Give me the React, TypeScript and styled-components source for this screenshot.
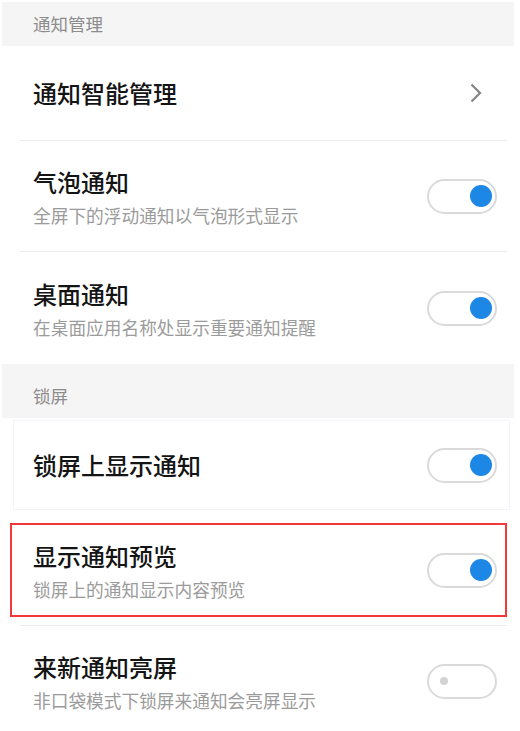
import React from 'react';
import styled, { createGlobalStyle } from 'styled-components';

const GlobalStyle = createGlobalStyle`
  html, body {
    margin: 0;
    padding: 0;
    background: #ffffff;
  }
  body {
    font-family: 'Noto Sans CJK SC', 'Noto Sans', sans-serif;
  }
`;

const Page = styled.div`
  width: 520px;
  height: 731px;
  overflow: hidden;
  background: #ffffff;
  padding-top: 2px;
  box-sizing: border-box;
`;

const SectionHeader = styled.div<{ $top: number; $bottom: number }>`
  margin: 0 6px 0 2px;
  background: #f5f5f5;
  padding: ${(p) => p.$top}px 0 ${(p) => p.$bottom}px 31px;
  font-size: 17.5px;
  line-height: 20px;
  color: #8d8d8d;
`;

const Row = styled.div<{ $height: number }>`
  display: flex;
  align-items: center;
  justify-content: space-between;
  height: ${(p) => p.$height}px;
  padding: 0 23px 0 33px;
  box-sizing: border-box;
`;

const BoxedRow = styled(Row)`
  margin: 2px 10px 0 13px;
  padding: 0 12px 0 19px;
  border: 1px solid #f1f4f8;
`;

const HighlightRow = styled(Row)`
  margin: 13px 13px 0 10px;
  padding: 0 8px 0 21px;
  border: 2px solid #f3383a;
`;

const TextBlock = styled.div`
  display: flex;
  flex-direction: column;
`;

const Title = styled.div`
  font-size: 24px;
  line-height: 30px;
  font-weight: 500;
  color: #141414;
`;

const Subtitle = styled.div`
  margin-top: 7px;
  font-size: 17.7px;
  line-height: 22px;
  color: #9b9b9b;
`;

const Divider = styled.div<{ $top?: number }>`
  height: 1px;
  margin: ${(p) => p.$top ?? 0}px 13px 0 20px;
  background: #ececec;
`;

const Track = styled.div`
  position: relative;
  width: 70px;
  height: 35px;
  box-sizing: border-box;
  border: 2px solid #dadada;
  border-radius: 18px;
  background: #ffffff;
  flex-shrink: 0;
`;

const Knob = styled.div<{ $on: boolean }>`
  position: absolute;
  top: 50%;
  transform: translateY(-50%);
  border-radius: 50%;
  ${(p) =>
    p.$on
      ? `
    right: 3px;
    width: 22px;
    height: 22px;
    background: #1d87e6;
  `
      : `
    left: 11px;
    width: 8px;
    height: 8px;
    background: #d3d3d3;
  `}
`;

const Chevron = styled.svg`
  width: 12px;
  height: 20px;
  margin-right: 15px;
`;

const Toggle: React.FC<{ on: boolean }> = ({ on }) => (
  <Track>
    <Knob $on={on} />
  </Track>
);

const Texts: React.FC<{ title: string; sub?: string }> = ({ title, sub }) => (
  <TextBlock>
    <Title>{title}</Title>
    {sub && <Subtitle>{sub}</Subtitle>}
  </TextBlock>
);

export default function App() {
  return (
    <Page>
      <GlobalStyle />
      <SectionHeader $top={12} $bottom={12}>通知管理</SectionHeader>

      <Row $height={94}>
        <Texts title="通知智能管理" />
        <Chevron viewBox="0 0 12 20">
          <path d="M1.5 1.5 L10 10 L1.5 18.5" fill="none" stroke="#858585" strokeWidth="2.2" />
        </Chevron>
      </Row>
      <Divider />

      <Row $height={110}>
        <Texts title="气泡通知" sub="全屏下的浮动通知以气泡形式显示" />
        <Toggle on />
      </Row>
      <Divider />

      <Row $height={112}>
        <Texts title="桌面通知" sub="在桌面应用名称处显示重要通知提醒" />
        <Toggle on />
      </Row>

      <SectionHeader $top={22} $bottom={12}>锁屏</SectionHeader>

      <BoxedRow $height={90}>
        <Texts title="锁屏上显示通知" />
        <Toggle on />
      </BoxedRow>

      <HighlightRow $height={94}>
        <Texts title="显示通知预览" sub="锁屏上的通知显示内容预览" />
        <Toggle on />
      </HighlightRow>
      <Divider $top={8} />

      <Row $height={110}>
        <Texts title="来新通知亮屏" sub="非口袋模式下锁屏来通知会亮屏显示" />
        <Toggle on={false} />
      </Row>
    </Page>
  );
}
